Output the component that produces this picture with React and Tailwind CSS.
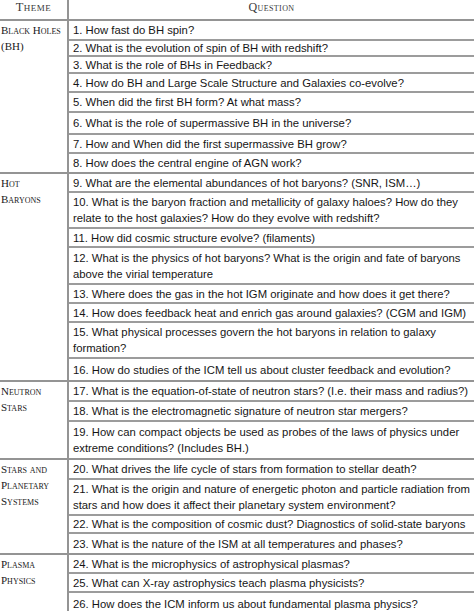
import React from 'react';

const groups = [
  {
    theme: ['Black Holes', '(BH)'],
    rows: [
      { h: 'h-[20px]', lines: ['1. How fast do BH spin?'] },
      { h: 'h-[16px]', lines: ['2. What is the evolution of spin of BH with redshift?'] },
      { h: 'h-[17px]', lines: ['3. What is the role of BHs in Feedback?'] },
      { h: 'h-[19px]', lines: ['4. How do BH and Large Scale Structure and Galaxies co-evolve?'] },
      { h: 'h-[20px]', lines: ['5. When did the first BH form? At what mass?'] },
      { h: 'h-[22px]', lines: ['6. What is the role of supermassive BH in the universe?'] },
      { h: 'h-[19px]', lines: ['7. How and When did the first supermassive BH grow?'] },
      { h: 'h-[18px]', lines: ['8. How does the central engine of AGN work?'] },
    ],
  },
  {
    theme: ['Hot', 'Baryons'],
    rows: [
      { h: 'h-[19px]', lines: ['9. What are the elemental abundances of hot baryons? (SNR, ISM\u2026)'] },
      {
        h: 'h-[36px]',
        lines: [
          '10. What is the baryon fraction and metallicity of galaxy haloes? How do they',
          'relate to the host galaxies? How do they evolve with redshift?',
        ],
      },
      { h: 'h-[19px]', lines: ['11. How did cosmic structure evolve? (filaments)'] },
      {
        h: 'h-[37px]',
        lines: [
          '12. What is the physics of hot baryons? What is the origin and fate of baryons',
          'above the virial temperature',
        ],
      },
      { h: 'h-[19px]', lines: ['13. Where does the gas in the hot IGM originate and how does it get there?'] },
      { h: 'h-[19px]', lines: ['14. How does feedback heat and enrich gas around galaxies? (CGM and IGM)'] },
      {
        h: 'h-[36px]',
        lines: ['15. What physical processes govern the hot baryons in relation to galaxy', 'formation?'],
      },
      { h: 'h-[21px]', lines: ['16. How do studies of the ICM tell us about cluster feedback and evolution?'] },
    ],
  },
  {
    theme: ['Neutron', 'Stars'],
    rows: [
      { h: 'h-[20px]', lines: ['17. What is the equation-of-state of neutron stars? (I.e. their mass and radius?)'] },
      { h: 'h-[20px]', lines: ['18. What is the electromagnetic signature of neutron star mergers?'] },
      {
        h: 'h-[36px]',
        lines: [
          '19. How can compact objects be used as probes of the laws of physics under',
          'extreme conditions? (Includes BH.)',
        ],
      },
    ],
  },
  {
    theme: ['Stars and', 'Planetary', 'Systems'],
    rows: [
      { h: 'h-[20px]', lines: ['20. What drives the life cycle of stars from formation to stellar death?'] },
      {
        h: 'h-[36px]',
        lines: [
          '21. What is the origin and nature of energetic photon and particle radiation from',
          'stars and how does it affect their planetary system environment?',
        ],
      },
      { h: 'h-[18px]', lines: ['22. What is the composition of cosmic dust? Diagnostics of solid-state baryons'] },
      { h: 'h-[19px]', lines: ['23. What is the nature of the ISM at all temperatures and phases?'] },
    ],
  },
  {
    theme: ['Plasma', 'Physics'],
    rows: [
      { h: 'h-[19px]', lines: ['24. What is the microphysics of astrophysical plasmas?'] },
      { h: 'h-[19px]', lines: ['25. What can X-ray astrophysics teach plasma physicists?'] },
      { h: 'h-[22px]', lines: ['26. How does the ICM inform us about fundamental plasma physics?'] },
    ],
  },
];

const serif = "font-['Liberation_Serif','Times_New_Roman',serif] [font-variant-caps:small-caps]";
const sans = "font-['Liberation_Sans',Arial,sans-serif]";

export default function App() {
  return (
    <div className="w-[474px] h-[611px] overflow-hidden bg-white">
      {/* header */}
      <div className="grid grid-cols-[67px_1fr] h-[21px] border-b-2 border-[#949494]">
        <div className={`${serif} text-[12.5px] leading-[13px] tracking-[0.5px] text-[#3a3a3a] text-center pt-[1px]`}>
          Theme
        </div>
        <div className={`${serif} text-[12px] leading-[13px] tracking-[0.4px] text-[#3a3a3a] text-center pt-[1px] border-l-2 border-[#949494]`}>
          Question
        </div>
      </div>

      {groups.map((g, gi) => (
        <div
          key={gi}
          className={`grid grid-cols-[67px_1fr] ${gi < groups.length - 1 ? 'border-b-2 border-[#949494]' : ''}`}
        >
          <div className={`${serif} text-[11px] leading-[16px] text-[#1a1a1a] pl-[1px] pt-[1px]`}>
            {g.theme.map((t) => (
              <div key={t}>{t}</div>
            ))}
          </div>
          <div className="border-l-2 border-[#949494]">
            {g.rows.map((r, ri) => (
              <div
                key={ri}
                className={`${r.h} flex items-center pl-[4px] ${
                  ri < g.rows.length - 1 ? 'border-b-2 border-[#9c9c9c]' : ''
                }`}
              >
                <div className={`${sans} text-[11.3px] leading-[16px] text-[#161616] whitespace-nowrap`}>
                  {r.lines.map((l, li) => (
                    <div key={li}>{l}</div>
                  ))}
                </div>
              </div>
            ))}
          </div>
        </div>
      ))}
    </div>
  );
}
